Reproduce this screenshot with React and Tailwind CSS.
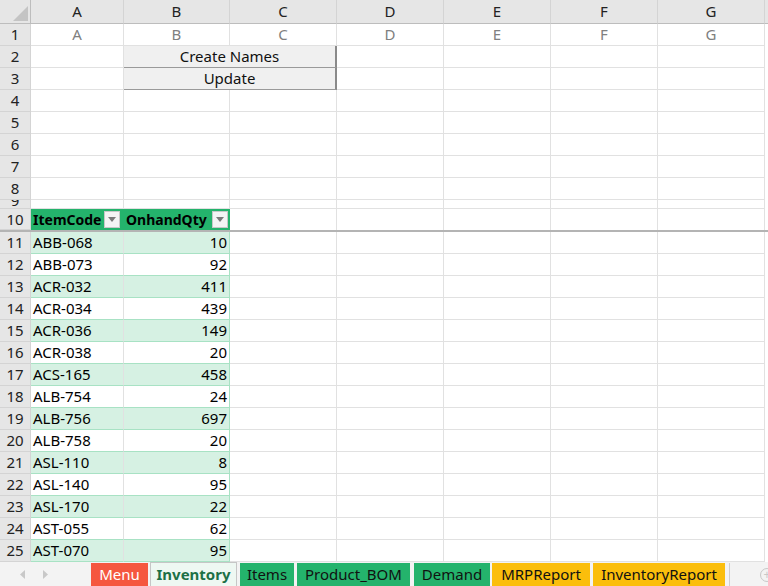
import React from 'react';

const font = { fontFamily: '"Noto Sans", "Open Sans", sans-serif' };

const widths = ['w-[93px]', 'w-[106px]', 'w-[107px]', 'w-[107px]', 'w-[107px]', 'w-[107px]', 'w-[107px]'];
const letters = ['A', 'B', 'C', 'D', 'E', 'F', 'G'];

const items = [
  ['ABB-068', 10], ['ABB-073', 92], ['ACR-032', 411], ['ACR-034', 439], ['ACR-036', 149],
  ['ACR-038', 20], ['ACS-165', 458], ['ALB-754', 24], ['ALB-756', 697], ['ALB-758', 20],
  ['ASL-110', 8], ['ASL-140', 95], ['ASL-170', 22], ['AST-055', 62], ['AST-070', 95],
];

function RowHead({ n, h = 'h-[22px]' }) {
  return (
    <div className={`w-[31px] ${h} shrink-0 bg-[#e6e6e6] border-r border-b border-[#d4d4d4] flex items-center justify-center text-[15px] text-[#222] overflow-hidden`}>
      {n}
    </div>
  );
}

function Blank({ i, h = 'h-[22px]' }) {
  return <div className={`${widths[i]} ${h} shrink-0 border-r border-b border-[#e1e1e1]`} />;
}

function Filter() {
  return (
    <div className="w-[16px] h-[17px] shrink-0 bg-[#f4f4f4] border border-[#c8c8c8] flex items-center justify-center">
      <svg width="8" height="5" viewBox="0 0 8 5"><path d="M0 0h8L4 5z" fill="#7a7a7a" /></svg>
    </div>
  );
}

function Tab({ label, w, cls }) {
  return (
    <div className={`${w} h-[23px] flex items-center justify-center text-[15px] shrink-0 ${cls}`}>{label}</div>
  );
}

export default function App() {
  return (
    <div className="w-[768px] h-[586px] bg-white overflow-hidden flex flex-col" style={font}>
      {/* column headers */}
      <div className="flex h-[24px] shrink-0">
        <div className="w-[31px] h-[24px] bg-[#e6e6e6] border-r border-b border-[#bdbdbd] relative">
          <svg className="absolute right-[2px] bottom-[2px]" width="15" height="15" viewBox="0 0 15 15"><path d="M15 0v15H0z" fill="#c4c4c4" /></svg>
        </div>
        {letters.map((l, i) => (
          <div key={l} className={`${widths[i]} h-[24px] shrink-0 bg-[#e6e6e6] border-r border-b border-r-[#d4d4d4] border-b-[#bdbdbd] flex items-center justify-center text-[15px] text-[#222]`}>{l}</div>
        ))}
        <div className="flex-1 bg-[#e6e6e6] border-b border-[#bdbdbd]" />
      </div>

      {/* row 1 */}
      <div className="flex">
        <RowHead n={1} />
        {letters.map((l, i) => (
          <div key={l} className={`${widths[i]} h-[22px] shrink-0 border-r border-b border-[#e1e1e1] flex items-center justify-center text-[15px] text-[#808080]`}>{l}</div>
        ))}
      </div>

      {/* rows 2-3 with buttons */}
      {['Create Names', 'Update'].map((b, r) => (
        <div key={b} className="flex">
          <RowHead n={r + 2} />
          <Blank i={0} />
          <div className="w-[213px] h-[22px] shrink-0 bg-[#f0f0f0] border-r-2 border-b border-r-[#8a8a8a] border-b-[#9a9a9a] flex items-center justify-center text-[15px] text-[#111]">{b}</div>
          {[3, 4, 5, 6].map(i => <Blank key={i} i={i} />)}
        </div>
      ))}

      {/* rows 4-8 */}
      {[4, 5, 6, 7, 8].map(n => (
        <div key={n} className="flex">
          <RowHead n={n} />
          {letters.map((l, i) => <Blank key={l} i={i} />)}
        </div>
      ))}

      {/* row 9, nearly hidden */}
      <div className="flex">
        <div className="w-[31px] h-[9px] shrink-0 bg-[#e6e6e6] border-r border-b border-[#d4d4d4] flex items-start justify-center text-[15px] leading-[0px] text-[#222] overflow-hidden">9</div>
        {letters.map((l, i) => <Blank key={l} i={i} h="h-[9px]" />)}
      </div>

      {/* row 10 table header */}
      <div className="flex border-b-2 border-[#b4b4b4]">
        <RowHead n={10} h="h-[21px]" />
        <div className="w-[93px] h-[21px] shrink-0 bg-[#24b36c] flex items-center justify-between pl-[2px] pr-[4px] font-bold text-[14px] text-black">
          ItemCode <Filter />
        </div>
        <div className="w-[106px] h-[21px] shrink-0 bg-[#24b36c] border-r border-[#24b36c] flex items-center justify-between pl-[2px] pr-[1px] font-bold text-[14px] text-black">
          OnhandQty <Filter />
        </div>
        {[2, 3, 4, 5, 6].map(i => <div key={i} className={`${widths[i]} h-[21px] shrink-0 border-r border-[#e1e1e1]`} />)}
      </div>

      {/* table rows */}
      {items.map(([code, qty], k) => {
        const band = k % 2 === 0 ? 'bg-[#d6f1e3]' : 'bg-white';
        return (
          <div key={code} className="flex">
            <RowHead n={k + 11} />
            <div className={`w-[93px] h-[22px] shrink-0 ${band} border-r border-b border-r-[#e1e1e1] border-b-[#a8e2c4] flex items-center pl-[2px] text-[15px] text-black`}>{code}</div>
            <div className={`w-[106px] h-[22px] shrink-0 ${band} border-r border-b border-[#a8e2c4] flex items-center justify-end pr-[2px] text-[15px] text-black`}>{qty}</div>
            {[2, 3, 4, 5, 6].map(i => <Blank key={i} i={i} />)}
          </div>
        );
      })}

      {/* sheet tabs */}
      <div className="flex-1 bg-[#f3f3f3] flex items-end">
        <div className="w-[91px] h-[23px] flex items-center shrink-0 pl-[20px] gap-[16px]">
          <svg width="6" height="9" viewBox="0 0 6 9"><path d="M5 0L0 4.5 5 9z" fill="#c8c8c8" /></svg>
          <svg width="6" height="9" viewBox="0 0 6 9"><path d="M1 0l5 4.5L1 9z" fill="#c8c8c8" /></svg>
        </div>
        <div className="flex gap-[2px] items-end">
          <Tab label="Menu" w="w-[57px]" cls="bg-[#f5573f] text-white" />
          <Tab label="Inventory" w="w-[87px]" cls="bg-[#eef8f2] text-[#1d7046] font-bold border border-b-0 border-[#c6c6c6] h-[24px]" />
          <Tab label="Items" w="w-[54px]" cls="bg-[#24b36c] text-[#111] ml-[1px]" />
          <Tab label="Product_BOM" w="w-[113px]" cls="bg-[#24b36c] text-[#111] ml-[1px]" />
          <Tab label="Demand" w="w-[76px]" cls="bg-[#24b36c] text-[#111] ml-[2px]" />
          <Tab label="MRPReport" w="w-[98px]" cls="bg-[#fbbe0c] text-[#111]" />
          <Tab label="InventoryReport" w="w-[132px]" cls="bg-[#fbbe0c] text-[#111] ml-[1px]" />
          <div className="w-px h-[23px] bg-[#cfcfcf] ml-[2px]" />
        </div>
        <div className="flex-1 h-[23px] flex items-center justify-end">
          <div className="w-[14px] h-[14px] rounded-full border border-[#c8c8c8] flex items-center justify-center text-[#c8c8c8] text-[12px] leading-none mr-[-6px]">+</div>
        </div>
      </div>
    </div>
  );
}
